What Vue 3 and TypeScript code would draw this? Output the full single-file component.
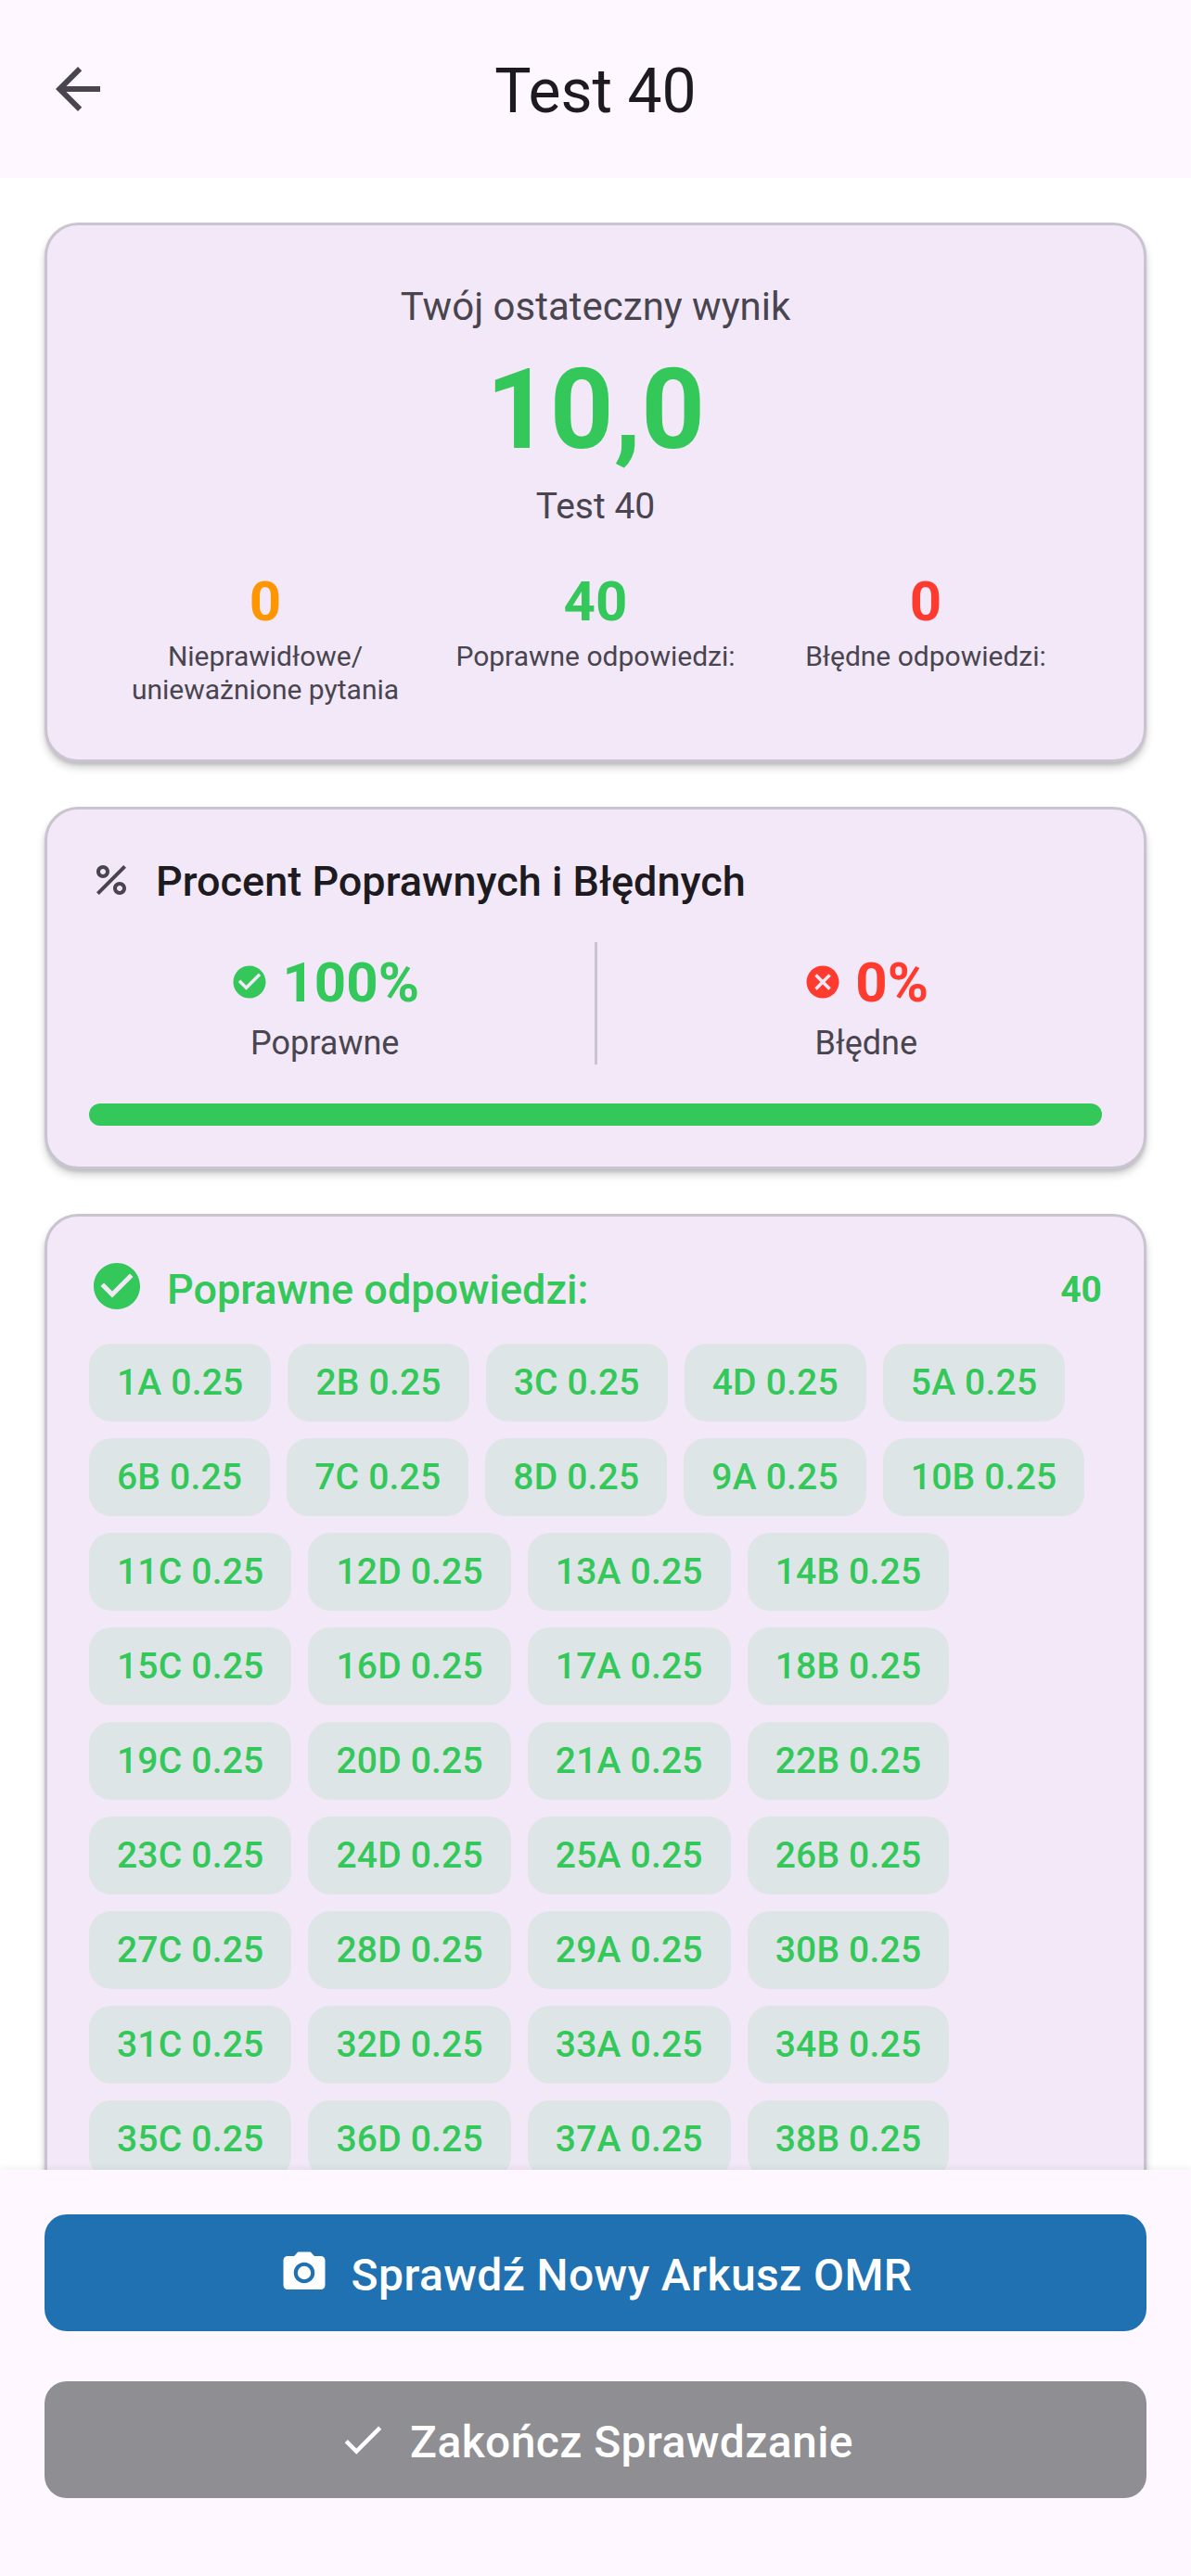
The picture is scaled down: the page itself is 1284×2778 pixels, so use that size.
<script setup lang="ts">
const letters: string[] = ['A', 'B', 'C', 'D']
const answers: string[] = Array.from({ length: 38 }, (_, i) => `${i + 1}${letters[i % 4]} 0.25`)

interface Stat { value: string; label: string; tone: string }
const stats: Stat[] = [
  { value: '0', label: 'Nieprawidłowe/ unieważnione pytania', tone: 'orange' },
  { value: '40', label: 'Poprawne odpowiedzi:', tone: 'green' },
  { value: '0', label: 'Błędne odpowiedzi:', tone: 'red' },
]
</script>

<template>
  <div class="screen">
    <header class="topbar">
      <svg class="back" viewBox="0 0 24 24"><path d="M20 11H7.83l5.59-5.59L12 4l-8 8 8 8 1.41-1.41L7.83 13H20v-2z" /></svg>
      <h1 class="title">Test 40</h1>
    </header>

    <main class="content">
      <section class="card score">
        <div class="score-caption">Twój ostateczny wynik</div>
        <div class="score-value">10,0</div>
        <div class="score-name">Test 40</div>
        <div class="stats">
          <div v-for="s in stats" :key="s.label" class="stat">
            <div class="stat-value" :class="s.tone">{{ s.value }}</div>
            <div class="stat-label">{{ s.label }}</div>
          </div>
        </div>
      </section>

      <section class="card percent">
        <div class="percent-head">
          <svg class="percent-icon" viewBox="0 0 24 24"><path d="M7.5 4C5.57 4 4 5.57 4 7.5S5.57 11 7.5 11 11 9.43 11 7.5 9.43 4 7.5 4zm0 5C6.67 9 6 8.33 6 7.5S6.67 6 7.5 6 9 6.67 9 7.5 8.33 9 7.5 9zm9 4c-1.93 0-3.5 1.57-3.5 3.5s1.57 3.5 3.5 3.5 3.5-1.57 3.5-3.5-1.57-3.5-3.5-3.5zm0 5c-.83 0-1.5-.67-1.5-1.5s.67-1.5 1.5-1.5 1.5.67 1.5 1.5-.67 1.5-1.5 1.5zM5.41 20 4 18.59 18.59 4 20 5.41 5.41 20z" /></svg>
          <h2 class="percent-title">Procent Poprawnych i Błędnych</h2>
        </div>
        <div class="split">
          <div class="split-col">
            <div class="split-value green">
              <svg class="split-icon" viewBox="0 0 24 24"><path d="M12 2C6.48 2 2 6.48 2 12s4.48 10 10 10 10-4.48 10-10S17.52 2 12 2zm-2 15-5-5 1.41-1.41L10 14.17l7.59-7.59L19 8l-9 9z" /></svg>
              <span>100%</span>
            </div>
            <div class="split-label">Poprawne</div>
          </div>
          <div class="split-divider"></div>
          <div class="split-col">
            <div class="split-value red">
              <svg class="split-icon" viewBox="0 0 24 24"><path d="M12 2C6.47 2 2 6.47 2 12s4.47 10 10 10 10-4.47 10-10S17.53 2 12 2zm5 13.59L15.59 17 12 13.41 8.41 17 7 15.59 10.59 12 7 8.41 8.41 7 12 10.59 15.59 7 17 8.41 13.41 12 17 15.59z" /></svg>
              <span>0%</span>
            </div>
            <div class="split-label">Błędne</div>
          </div>
        </div>
        <div class="bar"><div class="bar-fill" :style="{ width: '100%' }"></div></div>
      </section>

      <section class="card answers">
        <div class="answers-head">
          <svg class="answers-icon" viewBox="0 0 24 24"><path d="M12 2C6.48 2 2 6.48 2 12s4.48 10 10 10 10-4.48 10-10S17.52 2 12 2zm-2 15-5-5 1.41-1.41L10 14.17l7.59-7.59L19 8l-9 9z" /></svg>
          <h2 class="answers-title">Poprawne odpowiedzi:</h2>
          <span class="answers-count">40</span>
        </div>
        <div class="chips">
          <span v-for="a in answers" :key="a" class="chip">{{ a }}</span>
        </div>
      </section>
    </main>

    <footer class="actions">
      <button class="action blue" type="button">
        <svg class="action-icon" viewBox="0 0 24 24"><circle cx="12" cy="12" r="3.2" /><path d="M9 2 7.17 4H4c-1.1 0-2 .9-2 2v12c0 1.1.9 2 2 2h16c1.1 0 2-.9 2-2V6c0-1.1-.9-2-2-2h-3.17L15 2H9zm3 15c-2.76 0-5-2.24-5-5s2.24-5 5-5 5 2.24 5 5-2.24 5-5 5z" /></svg>
        <span class="action-text">Sprawdź Nowy Arkusz OMR</span>
      </button>
      <button class="action gray" type="button">
        <svg class="action-icon" viewBox="0 0 24 24"><path d="M9 16.17 4.83 12l-1.42 1.41L9 19 21 7l-1.41-1.41z" /></svg>
        <span class="action-text">Zakończ Sprawdzanie</span>
      </button>
    </footer>
  </div>
</template>

<style scoped>
.screen {
  width: 1284px;
  height: 2778px;
  display: flex;
  flex-direction: column;
  overflow: hidden;
  background: #ffffff;
  font-family: Roboto, "Noto Sans", sans-serif;
  color: #1d1b20;
}
.topbar {
  height: 192px;
  flex: none;
  background: #fef7ff;
  display: flex;
  align-items: center;
  justify-content: center;
  position: relative;
}
.back {
  position: absolute;
  left: 48px;
  top: 60px;
  width: 72px;
  height: 72px;
  fill: #49454f;
}
.title {
  margin: 0 0 -6px;
  font-size: 66px;
  line-height: 84px;
  font-weight: 400;
  color: #1d1b20;
}
.content {
  flex: 1;
  min-height: 0;
  overflow: hidden;
  padding: 48px 48px 0;
  display: flex;
  flex-direction: column;
  gap: 48px;
}
.card {
  flex: none;
  box-sizing: border-box;
  border: 3px solid #cac4d0;
  border-radius: 36px;
  background: #f2e8f8;
  box-shadow: 0 6px 9px rgba(0, 0, 0, 0.18), 0 3px 3px rgba(0, 0, 0, 0.1);
}
.score {
  padding: 55px 57px 57px;
  text-align: center;
}
.score-caption {
  font-size: 42px;
  line-height: 66px;
  color: #49454f;
}
.score-value {
  margin-top: 12px;
  font-size: 120px;
  line-height: 132px;
  font-weight: 700;
  color: #34c759;
}
.score-name {
  margin-top: 11px;
  font-size: 39px;
  line-height: 54px;
  color: #49454f;
}
.stats {
  margin-top: 43px;
  display: flex;
}
.stat {
  flex: 1;
  min-width: 0;
}
.stat-value {
  font-size: 60px;
  line-height: 66px;
  font-weight: 700;
}
.stat-label {
  margin-top: 8px;
  padding: 0 6px;
  font-size: 30px;
  line-height: 36px;
  color: #49454f;
}
.green { color: #34c759; }
.orange { color: #ff9500; }
.red { color: #ff3b30; }
.percent {
  padding: 46px 45px 44px;
}
.percent-head {
  display: flex;
  align-items: center;
  gap: 24px;
  height: 64px;
}
.percent-icon {
  width: 48px;
  height: 48px;
  margin-bottom: 4px;
  fill: #49454f;
}
.percent-title {
  margin: 0;
  font-size: 45px;
  line-height: 64px;
  font-weight: 500;
  color: #1d1b20;
}
.split {
  margin: 33px -36px 0;
  display: flex;
  height: 132px;
}
.split-col {
  flex: 1;
  padding-top: 7px;
  text-align: center;
}
.split-divider {
  width: 3px;
  background: #cac4d0;
}
.split-value {
  display: flex;
  align-items: center;
  justify-content: center;
  gap: 14px;
  height: 72px;
  font-size: 60px;
  font-weight: 700;
}
.split-icon {
  width: 42px;
  height: 42px;
  fill: currentColor;
}
.split-label {
  margin-top: 8px;
  font-size: 36px;
  line-height: 44px;
  color: #49454f;
}
.bar {
  margin-top: 42px;
  height: 24px;
  border-radius: 12px;
  overflow: hidden;
  background: #e0e0e0;
}
.bar-fill {
  height: 100%;
  background: #34c759;
}
.answers {
  padding: 45px;
}
.answers-head {
  display: flex;
  align-items: center;
  gap: 24px;
  height: 60px;
  color: #34c759;
}
.answers-icon {
  width: 60px;
  height: 60px;
  fill: currentColor;
}
.answers-title {
  margin: 8px 0 0;
  flex: 1;
  font-size: 45px;
  line-height: 48px;
  font-weight: 500;
}
.answers-count {
  margin-top: 8px;
  font-size: 39px;
  line-height: 48px;
  font-weight: 700;
}
.chips {
  margin-top: 32px;
  display: flex;
  flex-wrap: wrap;
  gap: 18px;
}
.chip {
  box-sizing: border-box;
  height: 84px;
  padding: 0 30px;
  border-radius: 24px;
  background: #dde5e6;
  color: #34c759;
  font-size: 39px;
  line-height: 84px;
  font-weight: 500;
  letter-spacing: 0.2px;
}
.actions {
  flex: none;
  height: 438px;
  box-sizing: border-box;
  padding: 48px 48px 84px;
  display: flex;
  flex-direction: column;
  gap: 54px;
  background: #fef7ff;
  box-shadow: 0 -3px 6px rgba(0, 0, 0, 0.05);
  position: relative;
}
.action {
  height: 126px;
  flex: none;
  border: 0;
  border-radius: 24px;
  display: flex;
  align-items: center;
  justify-content: center;
  gap: 24px;
  color: #ffffff;
  font-family: inherit;
  font-size: 48px;
  font-weight: 500;
  letter-spacing: 0.4px;
}
.action-text {
  padding-top: 4px;
}
.action-icon {
  width: 54px;
  height: 54px;
  fill: currentColor;
}
.blue { background: #1f71b1; }
.gray { background: #8e8e93; }
</style>
